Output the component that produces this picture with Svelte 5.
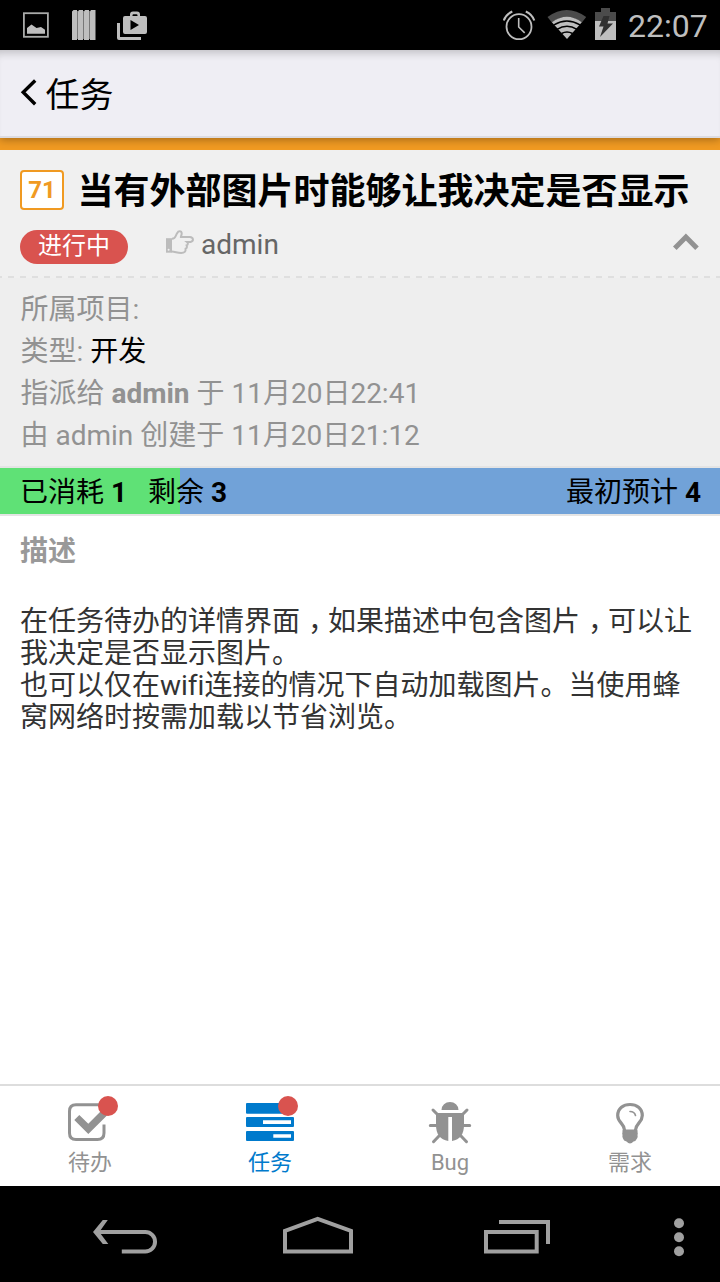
<script>
  const tabs = [
    { id: 'todo', label: '待办', dot: true },
    { id: 'task', label: '任务', dot: true, active: true },
    { id: 'bug', label: 'Bug' },
    { id: 'story', label: '需求' }
  ];
  const consumed = 1;
  const left = 3;
  const percent = (consumed / (consumed + left)) * 100;
</script>

<div class="screen">
  <div class="status">
    <svg width="160" height="50" viewBox="0 0 160 50">
      <rect x="23.9" y="13.2" width="24" height="23.6" fill="none" stroke="#a9aaa9" stroke-width="1.8" />
      <path d="M27 33.7V28l4.500-3.500 5 3.500 4.500-1 4 2.800v3.900z" fill="#bebebe" />
      <path d="M72 11.500l1.500-1.500H77v30h-5zM78 11.500l1-1.500h4v30h-5zM84 11.500l1-1.500h4v30h-5zM90 11.500l1-1.500h4.500v30H90z" fill="#bebebe" />
      <path d="M77.500 11v28M83.500 11v28M89.500 11v28" stroke="#777" stroke-width="1" />
      <path d="M117 23h3v14h21v3h-22a2 2 0 0 1-2-2z" fill="#bebebe" />
      <path fill-rule="evenodd" d="M125 16h5v-1.500q0-3 3-3h4q3 0 3 3V16h5a2 2 0 0 1 2 2v14a2 2 0 0 1-2 2h-20a2 2 0 0 1-2-2V18a2 2 0 0 1 2-2zm7.500 0h5v-.7q0-1-1-1h-3q-1 0-1 1zM130.500 20v10l8.500-5z" fill="#bebebe" />
    </svg>
    <span class="grow"></span>
    <svg width="120" height="50" viewBox="500 0 120 50">
      <g fill="none" stroke="#bebebe">
        <circle cx="519" cy="26.700" r="12.500" stroke-width="1.800" />
        <path d="M518.700 18v9l6 5.800" stroke-width="1.600" />
        <path d="M503.800 20.500q2-6 8.500-9M534.300 20.500q-2-6-8.500-9" stroke-width="2" />
      </g>
      <path d="M547.500 17q19.200-14 38.700 0l-4.300 5.500q-15-11-30 0z" fill="#4b4b4b" />
      <path d="M551.900 22.200q15-11 29.900 0L567 39z" fill="#bebebe" />
      <g fill="none" stroke="#000" stroke-width="1.500"><path d="M554 24.800q12.800-7.500 26 0M557 29.300q10-6 20 0M561.500 33.500q5.500-3 11 0" /></g>
      <path d="M595 21v-9h6V8h9v4h6v9z" fill="#4b4b4b" />
      <path d="M595 21h21v19h-21z" fill="#bebebe" />
      <path d="M603.500 16h6l-2 7.500h5.500L600 37l3.500-10.500h-4.500z" fill="#303030" />
    </svg>
    <span class="clock">22:07</span>
  </div>

  <header>
    <svg width="18" height="30" viewBox="20 77 18 30"><path d="M35.200 79.500L23.200 91.300 35.200 103.300" fill="none" stroke="#000" stroke-width="3.400" /></svg>
    <span class="back">任务</span>
  </header>

  <section class="heading">
    <div class="title-row">
      <span class="number">71</span>
      <h1>当有外部图片时能够让我决定是否显示</h1>
    </div>
    <div class="meta">
      <span class="pill">进行中</span>
      <svg class="hand" width="30" height="26" viewBox="165 229 30 26">
        <path d="M166 238.200h6v14.500h-6z" fill="#bcbcbc" />
        <path d="M172 238.700c4.500 0 3-3.500 5.500-6 .6-1.800 4-2.200 4.200.6.100 1.500-.8 2.600-.8 3.600h9c3.500.2 4.300 4.200.7 5h-3.600c1.500 1.200.9 3-.4 3.500.7 1.500.2 2.900-1 3.300.3 2.800-1 4.300-4.500 4.300-4 0-6-1.500-9.500-1.500" fill="none" stroke="#bcbcbc" stroke-width="2" />
        <circle cx="168.600" cy="249.800" r="1" fill="#f0f0f0" />
      </svg>
      <span class="user">admin</span>
      <span class="grow"></span>
      <svg width="28" height="20" viewBox="672 232 28 20"><path d="M674.800 248.300L685.900 237 697 248.300" fill="none" stroke="#929292" stroke-width="5" /></svg>
    </div>
  </section>

  <section class="info">
    <div>所属项目:</div>
    <div>类型: <em>开发</em></div>
    <div>指派给 <b>admin</b> 于 11月20日22:41</div>
    <div>由 admin 创建于 11月20日21:12</div>
  </section>

  <section class="progress">
    <div class="fill" style="width: {percent}%"></div>
    <div class="hours">
      <span>已消耗 <b>{consumed}</b></span>
      <span>剩余 <b>{left}</b></span>
      <span class="grow"></span>
      <span>最初预计 <b>4</b></span>
    </div>
  </section>

  <main>
    <h2>描述</h2>
    <p>在任务待办的详情界面<span class="comma">，</span>如果描述中包含图片<span class="comma">，</span>可以让<br />我决定是否显示图片。<br />也可以仅在wifi连接的情况下自动加载图片。当使用蜂<br />窝网络时按需加载以节省浏览。</p>
  </main>

  <nav class="tabs">
    {#each tabs as tab}
      <div class="tab" class:active={tab.active}>
        <div class="icon">
          <svg width="60" height="48" viewBox="0 0 60 48">
            {#if tab.id === 'todo'}
              <path d="M41.500 6.800H16q-6.500 0-6.500 6.500V35q0 6.500 6.500 6.500h21.500q6.500 0 6.500-6.500v-8.500" fill="none" stroke="currentColor" stroke-width="3" />
              <path d="M14.300 22l5-5 9 8.700L44.500 9.500l5.500 5L28.300 36z" fill="currentColor" />
            {:else if tab.id === 'task'}
              <path fill-rule="evenodd" d="M7 5h46a1 1 0 0 1 1 1v8.700a1 1 0 0 1-1 1H7a1 1 0 0 1-1-1V6a1 1 0 0 1 1-1zM7 19h46a1 1 0 0 1 1 1v8a1 1 0 0 1-1 1H7a1 1 0 0 1-1-1v-8a1 1 0 0 1 1-1zm16 3.300v3.700h28v-3.700zM7 33h46a1 1 0 0 1 1 1v8a1 1 0 0 1-1 1H7a1 1 0 0 1-1-1v-8a1 1 0 0 1 1-1zm26.300 3.200v3.600H51v-3.600z" fill="currentColor" />
            {:else if tab.id === 'bug'}
              <path d="M21.500 12a8.500 8 0 0 1 17 0zM16 15h28v12q0 14-12 16V19h-3.700v24Q16 41 16 27z" fill="currentColor" />
              <path d="M18.500 17.500l-5.500-5.500M41.500 17.500L47 12M17 27.500h-6.700M43 27.500h6.700M19 38l-5.500 5.700M41 38l5.500 5.700" stroke="currentColor" stroke-width="3" stroke-linecap="round" />
            {:else}
              <path d="M24.500 32C24 25 17.700 24.500 17.700 17.500 17.700 10 23.500 6.500 30 6.500S42.300 10 42.300 17.500C42.300 24.500 36 25 35.500 32" fill="none" stroke="currentColor" stroke-width="3.200" />
              <path d="M23 31.500h14q1 1 .5 2.500.6 1.500 0 3 .6 2-.5 3.500-1 2.500-3.500 3-3.500 4-7 0-3-.7-3.500-3-1-2-.5-3.500-.6-1.500 0-3-.5-1.500.5-2.500z" fill="currentColor" />
              <path d="M30 13.500q4.500 0 5.500 4" fill="none" stroke="currentColor" stroke-width="1.600" stroke-linecap="round" />
            {/if}
          </svg>
          {#if tab.dot}<i class="dot"></i>{/if}
        </div>
        <span class="label">{tab.label}</span>
      </div>
    {/each}
  </nav>

  <div class="keys">
    <svg width="720" height="96" viewBox="0 1186 720 96" fill="none" stroke="#a0a0a0" stroke-width="4">
      <path d="M121.800 1251.500H145.300a9.750 9.750 0 0 0 0-19.500H96" />
      <path d="M107.800 1220h-5l-9.800 12 9.800 12h5.500l-9-12z" fill="#a0a0a0" stroke="none" />
      <path d="M285 1251.500v-20.700l32.700-12 33.300 12v20.700z" />
      <path d="M486 1232h50.700v19.500H486zM499 1222h49v22" />
      <g fill="#a0a0a0" stroke="none"><circle cx="679" cy="1223.300" r="5" /><circle cx="679" cy="1237.300" r="5" /><circle cx="679" cy="1251.300" r="5" /></g>
    </svg>
  </div>
</div>

<style>
  :global(body) { margin: 0; }
  .screen {
    width: 720px; height: 1282px; display: flex; flex-direction: column;
    background: #fff; color: #000; overflow: hidden;
    font-family: Roboto, 'Noto Sans CJK SC', sans-serif; font-size: 28px;
    font-variant-ligatures: none;
  }
  svg { display: block; flex: none; }
  .grow { flex: 1; }
  .status { height: 50px; background: #000; display: flex; flex: none; }
  .clock { width: 100px; box-sizing: border-box; padding-left: 8px; font-size: 32px; line-height: 52px; color: #bebebe; }
  header {
    height: 88px; box-sizing: border-box; flex: none; display: flex; align-items: center;
    padding: 0 20px; background: #efeef4; border-bottom: 2px solid #dcdbe0; z-index: 1;
    box-shadow: 0 2px 8px rgba(0, 0, 0, .3), inset 0 9px 8px -6px rgba(0, 0, 0, .2);
  }
  .back { font-size: 34px; line-height: 44px; padding-top: 4px; margin-left: 7.5px; }
  .heading {
    height: 140px; box-sizing: border-box; flex: none; padding: 20px 20px 0; border-top: 12px solid #f09a22;
    background: repeating-linear-gradient(90deg, #dfdfdf 0 6px, transparent 6px 12px) -4px 100% / 732px 2px no-repeat, #f0f0f0;
  }
  .title-row { display: flex; height: 42px; }
  .number {
    width: 44px; height: 40px; box-sizing: border-box; border: 2px solid #f09a22; border-radius: 4px;
    background: #fff; color: #f09a22; font-weight: 700; font-size: 24px; line-height: 36px; text-align: center;
  }
  h1 { margin: 0 0 0 13.5px; font-size: 36px; line-height: 44px; font-weight: 700; white-space: nowrap; }
  .meta { display: flex; height: 34px; margin-top: 18px; }
  .pill {
    width: 108px; height: 34px; border-radius: 17px; background: #d9534f; color: #fff;
    font-size: 24px; line-height: 33px; text-align: center;
  }
  .hand { margin: -1px 6px 0 37px; }
  .user { color: #666; line-height: 29px; }
  .meta svg:last-child { margin: 2px 0 0; }
  .info { height: 188px; box-sizing: border-box; flex: none; padding: 11px 20px 9px 20.5px; background: #eee; color: #929292; }
  .info div { line-height: 42px; white-space: nowrap; }
  em { font-style: normal; color: #000; }
  b { font-weight: 700; }
  .progress {
    height: 50px; box-sizing: border-box; flex: none; display: grid;
    border-top: 2px solid #e4e4e4; border-bottom: 2px solid #e4e4e4; background: #71a2d8;
  }
  .fill, .hours { grid-area: 1 / 1; }
  .fill { background: #5fe176; }
  .hours { display: flex; gap: 21px; padding: 0 19px 0 20px; line-height: 50px; height: 46px; }
  main { flex: 1; padding: 15px 20px 0; }
  h2 { margin: 0; font-size: 28px; line-height: 42px; font-weight: 700; color: #999; }
  p { margin: 33px 0 0; line-height: 32px; color: #333; white-space: nowrap; }
  .comma { font-feature-settings: 'halt'; padding: 0 6px 0 8px; }
  .tabs { height: 102px; box-sizing: border-box; flex: none; display: flex; border-top: 2px solid #ddd; }
  .tab { flex: 1; display: flex; flex-direction: column; align-items: center; color: #929292; padding-top: 12px; }
  .active { color: #007acc; }
  .icon { position: relative; height: 48px; }
  .dot { position: absolute; left: 38px; top: -2px; width: 20px; height: 20px; border-radius: 50%; background: #d9534f; }
  .label { font-size: 22px; line-height: 34px; }
  .keys { height: 96px; background: #000; flex: none; }
</style>
